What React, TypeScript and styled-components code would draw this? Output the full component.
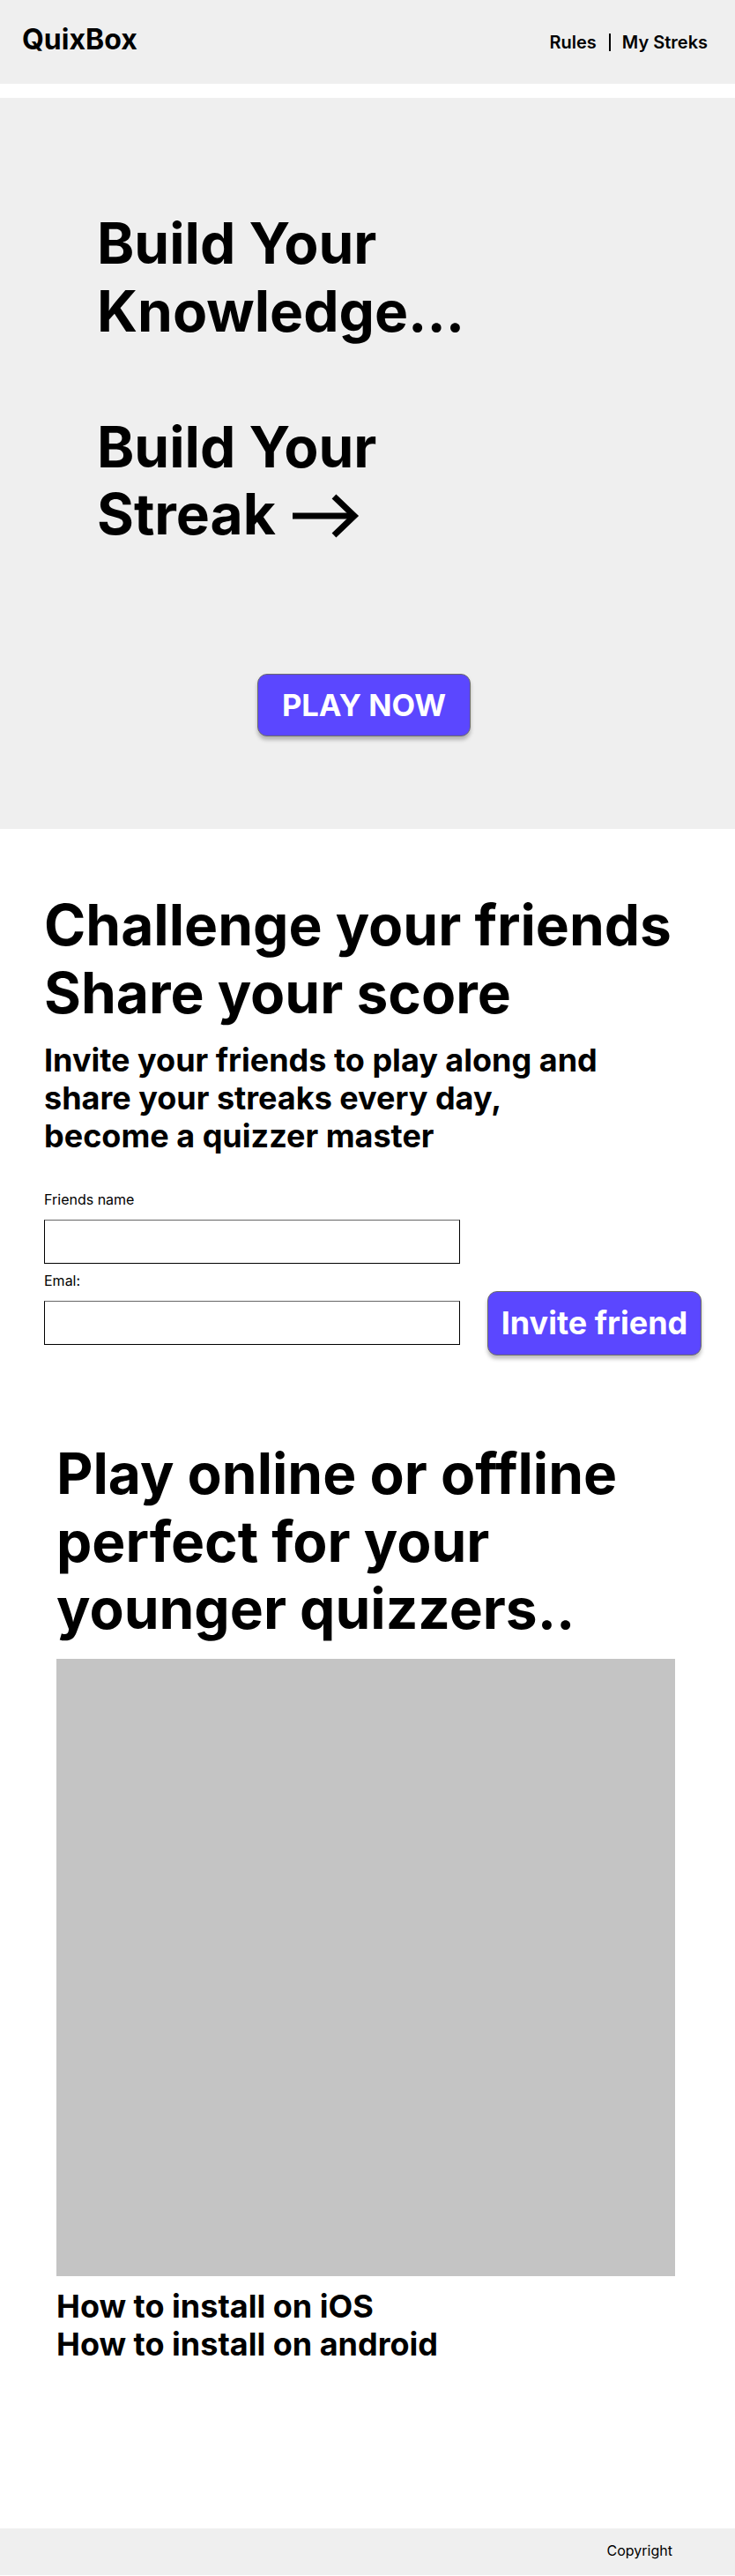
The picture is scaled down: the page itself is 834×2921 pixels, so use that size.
import styled, { createGlobalStyle } from 'styled-components'

const GlobalStyle = createGlobalStyle`
    * {
        box-sizing: border-box;
    }
    body {
        margin: 0;
        font-family: Inter, "Noto Sans", "Liberation Sans", sans-serif;
        color: #000;
        background: #fff;
    }
`

const Header = styled.header`
    height: 95px;
    padding: 0 31px 0 25px;
    display: flex;
    justify-content: space-between;
    align-items: center;
    background-color: #efefef;
`

const Logo = styled.div`
    font-size: 32px;
    font-weight: 700;
    padding-bottom: 7px;
`

const Nav = styled.nav`
    display: flex;
    align-items: center;
    font-size: 20px;
    font-weight: 600;
`

const NavDivider = styled.span`
    width: 2px;
    height: 20px;
    margin: 0 13px 0 14px;
    background-color: #000;
`

const Hero = styled.section`
    margin-top: 16px;
    height: 829px;
    padding-top: 127px;
    display: flex;
    flex-direction: column;
    background-color: #efefef;
`

const HeroText = styled.div`
    padding-left: 110px;
`

const HeroTitle = styled.h1<{ $gap?: number }>`
    max-width: 460px;
    margin: 0 0 ${(p) => p.$gap ?? 0}px;
    font-size: 64px;
    font-weight: 700;
    line-height: 1.2;
`

const Arrow = styled.svg`
    width: 76px;
    height: 50px;
    margin-left: 4px;
    vertical-align: -4px;
    overflow: visible;
`

const PlayButton = styled.button`
    align-self: center;
    margin: 142px 8px 0 0;
    width: 242px;
    height: 71px;
    border: 1px solid #6b6b6b;
    border-radius: 11px;
    background-color: #5b47ff;
    color: #fff;
    font-family: inherit;
    font-size: 34.5px;
    font-weight: 700;
    box-shadow: 0 4px 4px rgba(0, 0, 0, 0.25);
    cursor: pointer;
`

const InviteSection = styled.section`
    padding: 71px 0 0 50px;
`

const BigHeading = styled.h2`
    margin: 0;
    font-size: 64px;
    font-weight: 700;
    line-height: 1.2;
`

const SubHeading = styled.h3`
    max-width: 680px;
    margin: 16px 0 0;
    font-size: 36px;
    font-weight: 700;
    line-height: 1.2;
`

const InviteForm = styled.form`
    margin-top: 41px;
    display: grid;
    grid-template-columns: 472px 243px;
    column-gap: 31px;
`

const Label = styled.label<{ $first?: boolean }>`
    grid-column: 1;
    margin: ${(p) => (p.$first ? '0 0 12px' : '10px 0 2px')};
    font-size: 16px;
    line-height: 1.21;
`

const TextInput = styled.input`
    grid-column: 1;
    align-self: center;
    height: 50px;
    border: 1px solid #000;
    border-top-color: #666;
    font-family: inherit;
    font-size: 16px;
`

const InviteButton = styled.button`
    grid-column: 2;
    grid-row: 4;
    align-self: center;
    height: 73px;
    border: 1px solid #6b6b6b;
    border-radius: 11px;
    background-color: #5b47ff;
    color: #fff;
    font-family: inherit;
    font-size: 36px;
    font-weight: 700;
    box-shadow: 0 4px 4px rgba(0, 0, 0, 0.25);
    cursor: pointer;
`

const OfflineSection = styled.section`
    padding: 96px 0 186px 64px;
`

const OfflineHeading = styled(BigHeading)`
    max-width: 702px;
`

const ImageBox = styled.div`
    width: 702px;
    height: 700px;
    margin-top: 18px;
    background-color: #c4c4c4;
`

const InstallList = styled.div`
    margin-top: 13px;
    display: flex;
    flex-direction: column;
`

const InstallLink = styled.a`
    font-size: 36px;
    font-weight: 700;
    line-height: 1.2;
    color: #000;
    text-decoration: none;
`

const Footer = styled.footer`
    height: 53px;
    padding: 0 71px 3px 0;
    display: flex;
    justify-content: flex-end;
    align-items: center;
    background-color: #efefef;
    font-size: 16px;
`

export default function App() {
    return (
        <>
            <GlobalStyle />
            <Header>
                <Logo>QuixBox</Logo>
                <Nav>
                    <span>Rules</span>
                    <NavDivider />
                    <span>My Streks</span>
                </Nav>
            </Header>

            <Hero>
                <HeroText>
                    <HeroTitle $gap={77}>Build Your Knowledge...</HeroTitle>
                    <HeroTitle>
                        Build Your Streak{' '}
                        <Arrow viewBox="0 0 76 50" aria-hidden="true">
                            <path d="M0 25H68" stroke="#000" strokeWidth="7" fill="none" />
                            <path d="M47 3L70 25L47 47" stroke="#000" strokeWidth="7" fill="none" />
                        </Arrow>
                    </HeroTitle>
                </HeroText>
                <PlayButton>PLAY NOW</PlayButton>
            </Hero>

            <InviteSection>
                <BigHeading>
                    Challenge your friends
                    <br />
                    Share your score
                </BigHeading>
                <SubHeading>
                    Invite your friends to play along and share your streaks every day,
                    <br />
                    become a quizzer master
                </SubHeading>

                <InviteForm onSubmit={(e: any) => e.preventDefault()}>
                    <Label $first htmlFor="friend-name">Friends name</Label>
                    <TextInput id="friend-name" type="text" />
                    <Label htmlFor="friend-email">Emal:</Label>
                    <TextInput id="friend-email" type="email" />
                    <InviteButton type="submit">Invite friend</InviteButton>
                </InviteForm>
            </InviteSection>

            <OfflineSection>
                <OfflineHeading>Play online or offline perfect for your younger quizzers..</OfflineHeading>
                <ImageBox />
                <InstallList>
                    <InstallLink href="#">How to install on iOS</InstallLink>
                    <InstallLink href="#">How to install on android</InstallLink>
                </InstallList>
            </OfflineSection>

            <Footer>Copyright</Footer>
        </>
    )
}
